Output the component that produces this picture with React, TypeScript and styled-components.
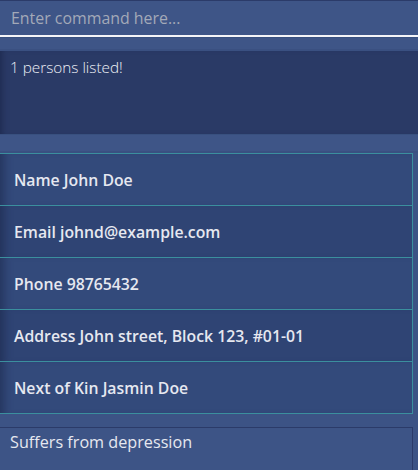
import React from "react";
import styled, { createGlobalStyle } from "styled-components";

const Global = createGlobalStyle`
  html, body { margin: 0; padding: 0; background: #3c5385; }
  * { box-sizing: border-box; }
`;

const Window = styled.div`
  width: 418px;
  height: 470px;
  overflow: hidden;
  background: #3c5385;
  display: flex;
  flex-direction: column;
  font-family: "Open Sans", "Noto Sans", sans-serif;
  color: #e4e6ee;
  & > * { flex-shrink: 0; }
`;

const CommandBar = styled.div`
  height: 37px;
  border-top: 1px solid #2b3b69;
  border-bottom: 2px solid #f4f4f8;
  background: #3e5587;
  display: flex;
  align-items: center;
  padding: 0 0 1px 11px;
`;

const CommandInput = styled.input`
  flex: 1;
  border: none;
  outline: none;
  background: transparent;
  font-family: inherit;
  font-size: 15.9px;
  color: #e4e6ee;
  padding: 0;
  &::placeholder { color: #a3a9b8; opacity: 1; }
`;

const Divider = styled.div<{ $h: number }>`
  height: ${(p) => p.$h}px;
  background: linear-gradient(#38507f 0 1px, #3e5587 1px calc(100% - 2px), #3a5081 calc(100% - 2px));
`;

const ResultBox = styled.div`
  height: 83px;
  background: #2a3a66;
  box-shadow: inset 6px 0 6px -4px rgba(20, 28, 60, 0.5);
  padding: 6px 10px;
  font-size: 15.3px;
  font-weight: 300;
  color: #eef0f6;
`;

const CardList = styled.div`
  width: 413px;
  display: flex;
  flex-direction: column;
  border-top: 1px solid #3b8f9e;
  border-right: 1px solid #3b8f9e;
`;

const Row = styled.div<{ $alt?: boolean }>`
  height: 52px;
  border-bottom: 1px solid #3b8f9e;
  background: ${(p) => (p.$alt ? "#2f4474" : "#334a7b")};
  box-shadow: inset 10px 0 8px -6px rgba(20, 28, 60, 0.45);
  display: flex;
  align-items: center;
  padding: 0 0 0 14px;
  font-size: 15.8px;
  font-weight: 600;
  color: #e6e8f0;
`;

const Remark = styled.div`
  margin-top: 13px;
  width: 413px;
  height: 60px;
  border: 1px solid #2b3b69;
  border-left: none;
  background: #3d5486;
  padding: 3px 10px;
  font-size: 16.2px;
  color: #e6e8f0;
`;

const fields: [string, string][] = [
  ["Name", "John Doe"],
  ["Email", "johnd@example.com"],
  ["Phone", "98765432"],
  ["Address", "John street, Block 123, #01-01"],
  ["Next of Kin", "Jasmin Doe"],
];

export default function App() {
  return (
    <>
      <Global />
      <Window>
        <CommandBar>
          <CommandInput placeholder="Enter command here..." />
        </CommandBar>
        <Divider $h={14} />
        <ResultBox>1 persons listed!</ResultBox>
        <Divider $h={19} />
        <CardList>
          {fields.map(([k, v], i) => (
            <Row key={k} $alt={i % 2 === 1}>
              {k} {v}
            </Row>
          ))}
        </CardList>
        <Remark>Suffers from depression</Remark>
      </Window>
    </>
  );
}
